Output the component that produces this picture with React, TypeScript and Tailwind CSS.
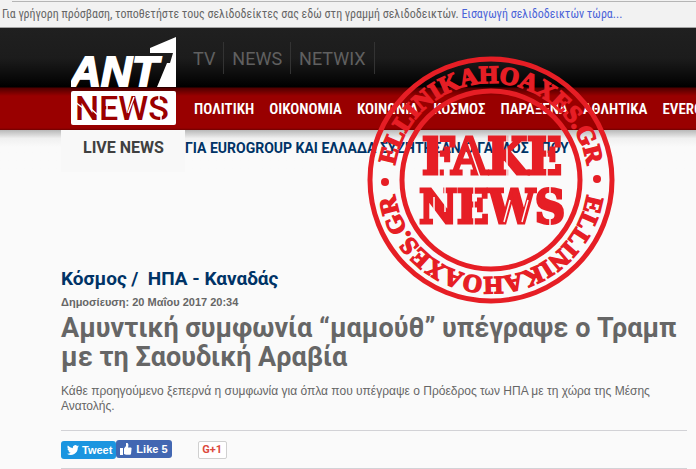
import React from 'react'

const channels = ['TV', 'NEWS', 'NETWIX']

const sections = ['ΠΟΛΙΤΙΚΗ', 'ΟΙΚΟΝΟΜΙΑ', 'ΚΟΙΝΩΝΙΑ', 'ΚΟΣΜΟΣ', 'ΠΑΡΑΞΕΝΑ', 'ΑΘΛΗΤΙΚΑ', 'EVERGREEN']

const Logo: React.FC = () => (
  <svg width="105" height="88" viewBox="0 0 105 88" aria-label="ANT1 News">
    <text x="-1" y="49" fontSize="43" className="fill-white stroke-white stroke-2 font-['Liberation_Sans',sans-serif] font-bold italic">ANT</text>
    <path d="M79 11 L105 0 V50 H86 L96 26 H99 L102 16 H79 Z" className="fill-white" />
    <rect x="0" y="54" width="105" height="34" rx="2" className="fill-white" />
    <text x="4" y="83" fontSize="34" className="fill-[#9b0000] font-['Roboto',sans-serif] font-medium">NEWS</text>
    <path d="M4 65 L12 71 M19 71 L28 79 M36 67 V78 M63 60 L57 76 M88 57 V66 M90 75 V85" className="stroke-white stroke-[1.5px]" />
  </svg>
)

const Stamp: React.FC = () => (
  <svg width="250" height="250" viewBox="-125 -125 250 250" className="fill-[#e61e25]" aria-label="Fake news">
    <defs>
      <path id="upper" d="M -97 0 A 97 97 0 0 1 97 0" />
      <path id="lower" d="M 97 0 A 97 97 0 0 1 -97 0" />
      {/* thin gaps of the stencil lettering */}
      <mask id="stencil" maskUnits="userSpaceOnUse" x="-125" y="-125" width="250" height="250">
        <rect x="-125" y="-125" width="250" height="250" fill="white" />
        <path
          d="M-52 -46 V-2 M-23 -38 L-11 -3 M16 -46 V-2 M56 -46 V-2 M-57 17 V47 M-46 4 V32 M-17 4 V46 M19 20 L13 42 M37 20 L31 42 M59 4 V17 M59 33 V46"
          fill="none"
          stroke="black"
          strokeWidth="1.5"
        />
      </mask>
    </defs>
    <circle r="121" fill="none" className="stroke-[#e61e25] stroke-[5px]" />
    <circle r="89" fill="none" className="stroke-[#e61e25] stroke-[5px]" />
    <circle cx="-106" cy="2" r="4" />
    <circle cx="106" cy="-1" r="4" />
    <g fontSize="25" textAnchor="middle" className="stroke-[#e61e25] stroke-[1.5px] font-['Liberation_Serif',serif] font-bold">
      <text><textPath href="#upper" startOffset="50%">ELLINIKAHOAXES.GR</textPath></text>
      <text><textPath href="#lower" startOffset="50%">ELLINIKAHOAXES.GR</textPath></text>
    </g>
    <g mask="url(#stencil)" textAnchor="middle" className="stroke-[#e61e25] stroke-[3px] font-['DejaVu_Serif_Condensed','DejaVu_Serif',serif] font-bold">
      <text x="1" y="-6" fontSize="51">FAKE</text>
      <text x="1" y="43" fontSize="46">NEWS</text>
    </g>
  </svg>
)

const App: React.FC = () => (
  <div className="relative min-h-[469px] overflow-hidden bg-[#fafafa] font-['Liberation_Sans',sans-serif] text-[#666]">
    {/* Browser bookmarks bar */}
    <div className="h-7 border-b border-[#a5a5a5] bg-[#f2f2f2] pt-px">
      <div className="ml-3 border-t border-[#b5b5b5]" />
      <p className="whitespace-nowrap pl-0.5 pt-1 font-['Roboto_Condensed','Roboto',sans-serif] text-[12px] leading-4 text-[#666]">
        Για γρήγορη πρόσβαση, τοποθετήστε τους σελιδοδείκτες σας εδώ στη γραμμή σελιδοδεικτών.{' '}
        <a href="#import" className="text-[#4a63d8]">Εισαγωγή σελιδοδεικτών τώρα...</a>
      </p>
    </div>

    <header className="flex h-[102px] bg-[linear-gradient(#202020_0,#1c1c1c_30px,#000_59px,#500000_60px,#990000_68px,#990000_100px,#700000)] pl-[71px]">
      <a href="#home" className="shrink-0 pt-[9px]"><Logo /></a>
      <div className="min-w-0 flex-1">
        <nav className="flex h-[60px] items-center font-['Roboto',sans-serif] text-[18px] text-[#606060]" aria-label="Κανάλια">
          {channels.map((c) => (
            <a key={c} href={`#${c}`} className="flex h-8 items-center border-r border-[#333] px-2 first:pl-[17px]">{c}</a>
          ))}
        </nav>
        <nav className="flex h-[42px] items-center gap-[15px] whitespace-nowrap pl-[18px] font-['Roboto_Condensed','Roboto',sans-serif] text-[15px] font-semibold text-white" aria-label="Ενότητες">
          {sections.map((s) => (
            <a key={s} href={`#${s}`}>{s}</a>
          ))}
        </nav>
      </div>
    </header>

    <div className="flex h-[42px] bg-linear-to-b from-[#b8b8b8] via-[#f0f0f0] via-20% to-[#fafafa] to-40% pl-[61px] font-['Roboto',sans-serif]">
      <div className="w-[124px] shrink-0 bg-[#f8f8f8] pl-[22px] pt-[6px] text-[16px] leading-6 font-bold text-[#404040]">LIVE NEWS</div>
      <a href="#live" className="whitespace-nowrap pt-[6px] text-[14px] leading-6 font-bold text-[#003366]">
        ΓΙΑ EUROGROUP ΚΑΙ ΕΛΛΑΔΑ ΣΥΖΗΤΗΣΑΝ Ο ΓΑΛΛΟΣ ΥΠΟΥ
      </a>
    </div>

    <main className="pl-[61px] pr-[9px] pt-[93px]">
      <p className="font-['Roboto',sans-serif] text-[19px] font-bold leading-7 text-[#003366]">
        <a href="#world">Κόσμος</a> /&nbsp; <a href="#usa">ΗΠΑ - Καναδάς</a>
      </p>
      <p className="pt-px text-[11px] font-bold leading-4">Δημοσίευση: 20 Μαΐου 2017 20:34</p>
      <h1 className="pt-1 font-['Roboto',sans-serif] text-[27px] font-bold leading-[29px]">
        Αμυντική συμφωνία “μαμούθ” υπέγραψε ο Τραμπ με τη Σαουδική Αραβία
      </h1>
      <p className="pt-3 text-[12px] leading-[15px]">
        Κάθε προηγούμενο ξεπερνά η συμφωνία για όπλα που υπέγραψε ο Πρόεδρος των ΗΠΑ με τη χώρα της Μέσης Ανατολής.
      </p>
      <div className="mt-4 flex h-[39px] items-start border-y border-[#d2d2d6] pt-[9px] text-[11px] font-bold text-white">
        <button className="mt-px flex h-[18px] items-center gap-[3px] rounded-[3px] bg-[#1b95e0] pl-1.5 pr-1">
          <svg width="12" height="12" viewBox="0 0 24 24" fill="currentColor" aria-hidden="true">
            <path d="M24 4.6a10 10 0 0 1-2.8.8 5 5 0 0 0 2.1-2.7c-1 .6-2 1-3.100 1.200A4.900 4.900 0 0 0 11.800 8.400 14 14 0 0 1 1.700 3.200a4.900 4.900 0 0 0 1.500 6.600 5 5 0 0 1-2.200-.6 4.900 4.900 0 0 0 3.900 4.900 5 5 0 0 1-2.200.1 4.900 4.900 0 0 0 4.600 3.400A9.900 9.900 0 0 1 0 19.600a14 14 0 0 0 21.500-12.500A10 10 0 0 0 24 4.600z" />
          </svg>
          Tweet
        </button>
        <button className="flex h-[18px] items-center gap-1 rounded-[3px] bg-[#4267b2] px-1">
          <svg width="12" height="12" viewBox="0 0 12 12" fill="currentColor" aria-hidden="true">
            <path d="M0 5h3v7H0zM4 5.500 6 3V0h1.500q1.500 1 .5 4.500h3q1 .5.500 1.500L11 11q-.3.700-1 .700H6L4 11z" />
          </svg>
          Like 5
        </button>
        <button className="ml-[26px] mt-px flex h-[18px] w-[29px] items-center justify-center rounded-xs border border-[#d0d0d0] bg-white font-['Roboto',sans-serif] text-[#dc4a3d]">
          G+1
        </button>
      </div>
    </main>

    {/* Stamp laid over the page */}
    <div className="pointer-events-none absolute left-[366px] top-[55px]"><Stamp /></div>
  </div>
)

export default App
